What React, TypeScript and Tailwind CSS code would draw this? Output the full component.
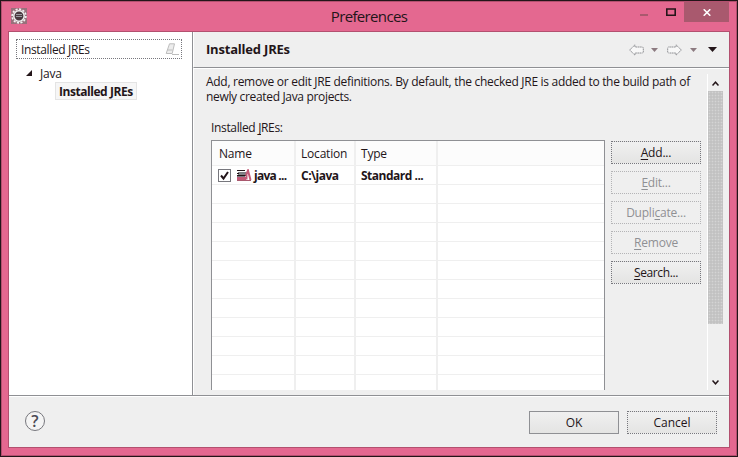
import React from "react";

const pushButton =
  "flex h-[23px] w-[90px] shrink-0 items-center justify-center border text-[12px] leading-[15px] bg-linear-to-b from-[#f0f0f0] to-[#e4e4e3]";

function PushButton({ children, disabled, primary }: { children: React.ReactNode; disabled?: boolean; primary?: boolean }) {
  if (disabled) {
    return (
      <button className="flex h-[23px] w-[90px] shrink-0 items-center justify-center border border-dotted border-[#b4b4b6] bg-[#efefef] text-[12px] leading-[15px] tracking-[-0.22px] text-[#8f9094]">
        {children}
      </button>
    );
  }
  return (
    <button className={pushButton + (primary ? " border-[#8f9094]" : " border-dotted border-[#77777d]")}>{children}</button>
  );
}

function Key({ children }: { children: React.ReactNode }) {
  return <span className="underline underline-offset-2">{children}</span>;
}

function GearIcon() {
  return (
    <svg className="h-4 w-4" viewBox="0 0 16 16">
      <rect width="16" height="16" fill="#98707b" />
      <circle cx="8" cy="8" r="6.9" fill="none" stroke="#f4f4f4" strokeWidth="1.6" strokeDasharray="2.1 1.5" />
      <circle cx="8" cy="8" r="5.2" fill="#4a3a40" stroke="#f0f0f0" strokeWidth="1.5" />
      <path d="M5 6.500h6M5 8.500h6" stroke="#9a9aa0" />
    </svg>
  );
}

function BooksIcon() {
  return (
    <svg className="h-[13px] w-4" viewBox="0 0 16 13">
      <path d="M1 1.500h8M1 6.500h9" stroke="#231519" />
      <path d="M2 3h8v3H2z" fill="#808085" />
      <path d="M1 4.500h2" stroke="#231519" />
      <path d="M1 8h9v3.500H1z" fill="#c25a78" />
      <path d="M1 7.500h8" stroke="#77777d" />
      <path d="M10.500 10.500V5L12 1.500L14.500 11" fill="none" stroke="#c25a78" strokeWidth="2" />
      <path d="M1 11.500h14" stroke="#a9596e" />
    </svg>
  );
}

function Arrow({ flip }: { flip?: boolean }) {
  return (
    <svg className={"h-[12px] w-[15px]" + (flip ? " -scale-x-100" : "")} viewBox="0 0 15 12">
      <path d="M.7 6L6 .8V3h7.500l.8.8v4.400l-.8.8H6v2.200z" fill="#f8f8f8" stroke="#8f9094" strokeDasharray="1.6 .5" />
    </svg>
  );
}

function Caret({ dark }: { dark?: boolean }) {
  return dark ? (
    <svg className="h-[5px] w-[9px]" viewBox="0 0 9 5"><path d="M0 0h9L4.500 5z" fill="#231519" /></svg>
  ) : (
    <svg className="h-[4px] w-[7px]" viewBox="0 0 7 4"><path d="M0 0h7L3.500 4z" fill="#8c7a80" /></svg>
  );
}

function Row({ cells, header }: { cells: React.ReactNode[]; header?: boolean }) {
  return (
    <div className={"flex shrink-0 " + (header ? "h-6 bg-[#fcfcfc]" : "h-[18px]")}>
      <div className="box-content flex w-[82px] items-center border-r-2 border-[#efefef]">{cells[0]}</div>
      <div className="box-content flex w-[58px] items-center border-r-2 border-[#efefef]"><span className="pl-[5px]">{cells[1]}</span></div>
      <div className="box-content flex w-[80px] items-center border-r-2 border-[#efefef]"><span className="pl-[5px]">{cells[2]}</span></div>
    </div>
  );
}

export default function App() {
  return (
    <div className="h-[457px] w-[738px] overflow-hidden border border-[#231519] bg-[#e46890] font-['Open_Sans','Noto_Sans',sans-serif] text-[12px] leading-[15px] text-[#231519]">
      <div className="flex h-[455px] flex-col border border-[#b3506f] px-[6px] pb-[7px]">
        <div className="flex h-[29px] shrink-0 items-start">
          <div className="w-[103px] pl-[3px] pt-[6px]"><GearIcon /></div>
          <div className="flex-1 pt-[4px] text-center text-[15px] leading-5"><span className="tracking-[-0.65px]">Preferences</span></div>
          <div className="-mr-[6px] flex h-5 w-[109px] items-start">
            <svg className="ml-[13px] mt-[12px] h-[2px] w-2" viewBox="0 0 8 2"><path d="M0 0h8v2H0z" fill="#a9596e" /></svg>
            <svg className="ml-[18px] mt-[6px] h-2 w-[10px]" viewBox="0 0 10 8"><path d="M.8 1h8.400v6.300H.8z" fill="none" stroke="#231519" strokeWidth="1.6" /></svg>
            <div className="ml-[8px] flex h-5 w-[45px] items-center justify-center bg-[#a9596e]">
              <svg className="h-[7px] w-2" viewBox="0 0 8 7"><path d="M.7.3l6.600 6.400M7.300.3L.7 6.700" stroke="#fff" strokeWidth="1.6" /></svg>
            </div>
          </div>
        </div>
        <div className="flex min-h-0 flex-1 flex-col border border-[#b3506f] bg-[#efefef]">
          <div className="flex h-[363px] shrink-0">
            <div className="w-[183px] shrink-0 bg-white pl-[7px] pt-[7px]">
              <div className="flex h-5 w-[166px] items-center justify-between border border-dotted border-[#77777d] pl-1 pr-[2px]">
                <span className="whitespace-nowrap tracking-[-0.36px]">Installed JREs</span>
                <svg className="h-3 w-[14px]" viewBox="0 0 14 12">
                  <path d="M4.500.8h5L7.200 10.500H1.200z" fill="#ededed" stroke="#bdbdbd" />
                  <path d="M2 7h5.500M7 11.500h7" stroke="#bdbdbd" />
                </svg>
              </div>
              <div className="mt-[6px] flex h-4 items-center pl-[10px]">
                <svg className="h-[6px] w-[6px]" viewBox="0 0 6 6"><path d="M6 0v6H0z" fill="#231519" /></svg>
                <span className="pl-[8px] tracking-[-0.2px]">Java</span>
              </div>
              <div className="ml-[39px] mt-px flex h-[18px] w-[82px] items-center border border-[#e4e4e4] bg-[#f6f6f6] pl-[3px] font-bold"><span className="whitespace-nowrap tracking-[-0.45px]">Installed JREs</span></div>
            </div>
            <div className="flex min-w-0 flex-1 flex-col border-l border-[#8f9094]">
              <div className="flex h-9 shrink-0 items-center justify-between border-b border-l border-[#8f9094] border-l-white pl-3 pr-[12px]">
                <span className="text-[13px] font-bold tracking-[-0.2px]">Installed JREs</span>
                <div className="flex items-center">
                  <Arrow /><span className="pl-[7px]"><Caret /></span>
                  <span className="pl-[9px]"><Arrow flip /></span><span className="pl-[8px]"><Caret /></span>
                  <span className="pl-[11px]"><Caret dark /></span>
                </div>
              </div>
              <div className="flex min-h-0 flex-1 border-l border-t border-white pb-[5px] pr-[6px]">
                <div className="flex min-w-0 flex-1 flex-col pl-3 pt-[5px]">
                  <div className="flex h-[30px] flex-col whitespace-nowrap">
                    <div className="tracking-[-0.29px]">Add, remove or edit JRE definitions. By default, the checked JRE is added to the build path of</div>
                    <div className="tracking-[-0.33px]">newly created Java projects.</div>
                  </div>
                  <div className="ml-[5px] mt-[16px] h-[20px] tracking-[-0.35px]">Installed <Key>J</Key>REs:</div>
                  <div className="ml-[5px] flex min-h-0 flex-1">
                    <div className="flex w-[394px] shrink-0 flex-col overflow-hidden border border-b-0 border-[#8f9094] bg-white">
                      <div className="shrink-0 bg-[#fcfcfc] tracking-[-0.2px]">
                        <Row header cells={[<span className="pl-[7px]">Name</span>, "Location", "Type"]} />
                      </div>
                      <div className="h-px shrink-0 bg-[#efefef]" />
                      <div className="font-bold tracking-[-0.5px]">
                        <Row
                          cells={[
                            <span className="flex items-center whitespace-nowrap pl-[6px]">
                              <svg className="h-[13px] w-[13px]" viewBox="0 0 13 13">
                                <rect x=".5" y=".5" width="12" height="12" fill="#fff" stroke="#77777d" />
                                <path d="M3 6.500l2.500 3L10 3" fill="none" stroke="#231519" strokeWidth="2" />
                              </svg>
                              <span className="pl-[5px] pr-[2px]"><BooksIcon /></span>
                              <span className="tracking-[-0.75px]">java ...</span>
                            </span>,
                            "C:\\java",
                            "Standard ...",
                          ]}
                        />
                      </div>
                      {Array.from({ length: 11 }, (_, i) => (
                        <div key={i} className="shrink-0 border-t border-[#efefef]"><Row cells={["", "", ""]} /></div>
                      ))}
                    </div>
                    <div className="flex flex-col gap-[7px] pl-[6px] pt-px">
                      <PushButton><span className="tracking-[-0.2px]"><Key>A</Key>dd...</span></PushButton>
                      <PushButton disabled><span><Key>E</Key>dit...</span></PushButton>
                      <PushButton disabled><span>Dupli<Key>c</Key>ate...</span></PushButton>
                      <PushButton disabled><span><Key>R</Key>emove</span></PushButton>
                      <PushButton><span className="tracking-[-0.4px]"><Key>S</Key>earch...</span></PushButton>
                    </div>
                  </div>
                </div>
                <div className="mt-[5px] flex w-4 shrink-0 flex-col items-center border-l border-white">
                  <svg className="mt-[7px] h-[5px] w-[7px] shrink-0" viewBox="0 0 7 5"><path d="M.5 4.500l3-3.300 3 3.300" fill="none" stroke="#231519" strokeWidth="1.5" /></svg>
                  <div className="mt-[5px] h-[233px] w-[15px] shrink-0 bg-[#c2c2c2] bg-[radial-gradient(#d4d4d4_40%,transparent_50%)] bg-[size:3px_3px]" />
                  <svg className="mt-[56px] h-[5px] w-[7px] shrink-0" viewBox="0 0 7 5"><path d="M.5.5l3 3.300 3-3.300" fill="none" stroke="#231519" strokeWidth="1.500" /></svg>
                </div>
              </div>
            </div>
          </div>
          <div className="flex min-h-0 flex-1 items-start border-t border-[#8f9094]">
            <div className="flex flex-1 items-start border-t border-white pl-4 pr-3 pt-[14px]">
              <div className="flex h-5 w-5 items-center justify-center rounded-full border border-[#77777d] bg-[#f4f4f4] text-[16px] font-semibold leading-5 text-[#4a4a55]">?</div>
              <div className="flex-1" />
              <div className="flex gap-2">
                <PushButton primary><span>OK</span></PushButton>
                <PushButton><span>Cancel</span></PushButton>
              </div>
            </div>
          </div>
        </div>
      </div>
    </div>
  );
}
